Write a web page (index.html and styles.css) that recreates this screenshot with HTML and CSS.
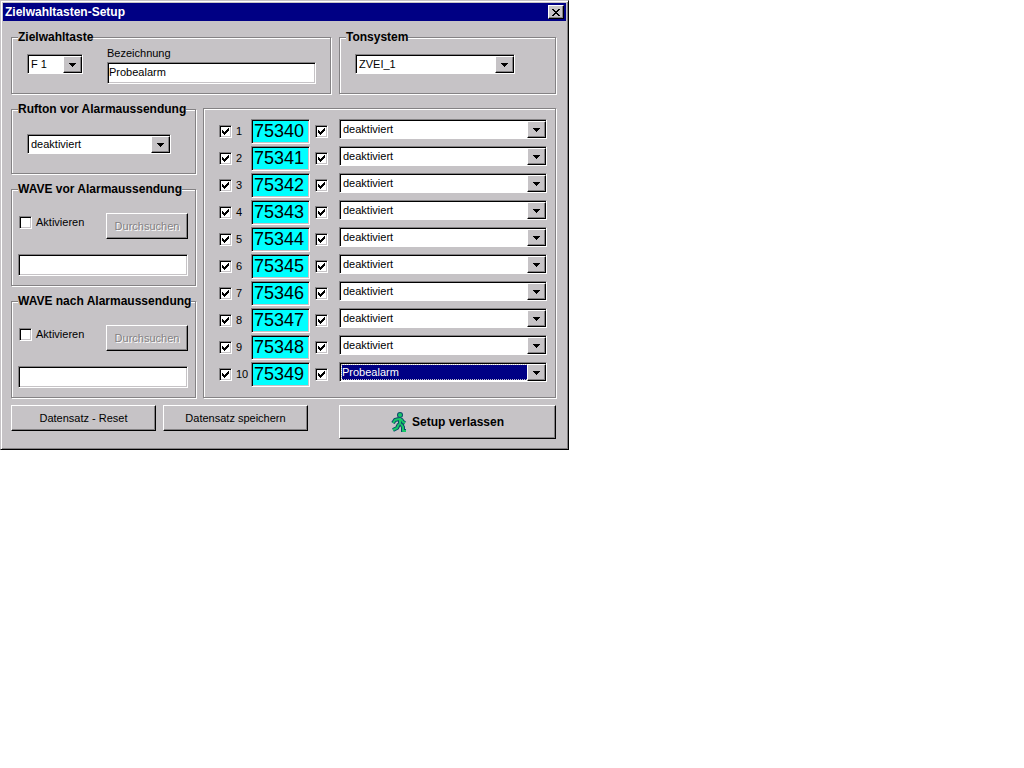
FILE: index.html
```
<!DOCTYPE html>
<html lang="de">
<head>
    <meta charset="UTF-8">
    <meta name="viewport" content="width=device-width, initial-scale=1.0">
    <title>Zielwahltasten-Setup</title>
    <link rel="stylesheet" href="styles.css">
</head>
<body>
    <form class="window" onsubmit="return false">
        <header class="titlebar">
            <h1>Zielwahltasten-Setup</h1>
            <button type="button" class="close" aria-label="Schließen">
                <svg width="8" height="7" viewBox="0 0 8 7" shape-rendering="crispEdges"><path d="M0 0h2v1h1v1h2V1h1V0h2v1H7v1H6v1H5v1h1v1h1v1h1v1H6V6H5V5H3v1H2v1H0V6h1V5h1V4h1V3H2V2H1V1H0z"/></svg>
            </button>
        </header>

        <div class="content">
            <div class="top">
                <fieldset class="group target">
                    <legend>Zielwahltaste</legend>
                    <div class="target-fields">
                        <span class="combo key">
                            <select aria-label="Zielwahltaste"><option>F 1</option></select>
                        </span>
                        <div class="field">
                            <label for="name">Bezeichnung</label>
                            <input type="text" class="text" id="name" value="Probealarm">
                        </div>
                    </div>
                </fieldset>
                <fieldset class="group tone">
                    <legend>Tonsystem</legend>
                    <span class="combo">
                        <select aria-label="Tonsystem"><option>ZVEI_1</option></select>
                    </span>
                </fieldset>
            </div>

            <div class="main">
                <div class="side">
                    <fieldset class="group ring">
                        <legend>Rufton vor Alarmaussendung</legend>
                        <span class="combo">
                            <select aria-label="Rufton"><option>deaktiviert</option></select>
                        </span>
                    </fieldset>
                    <fieldset class="group wave">
                        <legend>WAVE vor Alarmaussendung</legend>
                        <div class="wave-row">
                            <label class="check"><input type="checkbox"> Aktivieren</label>
                            <button type="button" class="button" disabled>Durchsuchen</button>
                        </div>
                        <input type="text" class="text" aria-label="WAVE-Datei vor Alarmaussendung">
                    </fieldset>
                    <fieldset class="group wave">
                        <legend>WAVE nach Alarmaussendung</legend>
                        <div class="wave-row">
                            <label class="check"><input type="checkbox"> Aktivieren</label>
                            <button type="button" class="button" disabled>Durchsuchen</button>
                        </div>
                        <input type="text" class="text" aria-label="WAVE-Datei nach Alarmaussendung">
                    </fieldset>
                </div>

                <div class="group calls">
                    <div class="call">
                        <label class="check"><input type="checkbox" checked> 1</label>
                        <input type="text" class="code" value="75340" aria-label="Ruf 1">
                        <input type="checkbox" checked aria-label="Alarm 1">
                        <span class="combo"><select aria-label="Alarmart 1"><option>deaktiviert</option></select></span>
                    </div>
                    <div class="call">
                        <label class="check"><input type="checkbox" checked> 2</label>
                        <input type="text" class="code" value="75341" aria-label="Ruf 2">
                        <input type="checkbox" checked aria-label="Alarm 2">
                        <span class="combo"><select aria-label="Alarmart 2"><option>deaktiviert</option></select></span>
                    </div>
                    <div class="call">
                        <label class="check"><input type="checkbox" checked> 3</label>
                        <input type="text" class="code" value="75342" aria-label="Ruf 3">
                        <input type="checkbox" checked aria-label="Alarm 3">
                        <span class="combo"><select aria-label="Alarmart 3"><option>deaktiviert</option></select></span>
                    </div>
                    <div class="call">
                        <label class="check"><input type="checkbox" checked> 4</label>
                        <input type="text" class="code" value="75343" aria-label="Ruf 4">
                        <input type="checkbox" checked aria-label="Alarm 4">
                        <span class="combo"><select aria-label="Alarmart 4"><option>deaktiviert</option></select></span>
                    </div>
                    <div class="call">
                        <label class="check"><input type="checkbox" checked> 5</label>
                        <input type="text" class="code" value="75344" aria-label="Ruf 5">
                        <input type="checkbox" checked aria-label="Alarm 5">
                        <span class="combo"><select aria-label="Alarmart 5"><option>deaktiviert</option></select></span>
                    </div>
                    <div class="call">
                        <label class="check"><input type="checkbox" checked> 6</label>
                        <input type="text" class="code" value="75345" aria-label="Ruf 6">
                        <input type="checkbox" checked aria-label="Alarm 6">
                        <span class="combo"><select aria-label="Alarmart 6"><option>deaktiviert</option></select></span>
                    </div>
                    <div class="call">
                        <label class="check"><input type="checkbox" checked> 7</label>
                        <input type="text" class="code" value="75346" aria-label="Ruf 7">
                        <input type="checkbox" checked aria-label="Alarm 7">
                        <span class="combo"><select aria-label="Alarmart 7"><option>deaktiviert</option></select></span>
                    </div>
                    <div class="call">
                        <label class="check"><input type="checkbox" checked> 8</label>
                        <input type="text" class="code" value="75347" aria-label="Ruf 8">
                        <input type="checkbox" checked aria-label="Alarm 8">
                        <span class="combo"><select aria-label="Alarmart 8"><option>deaktiviert</option></select></span>
                    </div>
                    <div class="call">
                        <label class="check"><input type="checkbox" checked> 9</label>
                        <input type="text" class="code" value="75348" aria-label="Ruf 9">
                        <input type="checkbox" checked aria-label="Alarm 9">
                        <span class="combo"><select aria-label="Alarmart 9"><option>deaktiviert</option></select></span>
                    </div>
                    <div class="call">
                        <label class="check"><input type="checkbox" checked> 10</label>
                        <input type="text" class="code" value="75349" aria-label="Ruf 10">
                        <input type="checkbox" checked aria-label="Alarm 10">
                        <span class="combo selected"><select aria-label="Alarmart 10"><option>Probealarm</option></select></span>
                    </div>
                </div>
            </div>

            <div class="actions">
                <button type="button" class="button">Datensatz - Reset</button>
                <button type="button" class="button">Datensatz speichern</button>
                <button type="button" class="button leave">
                    <svg width="16" height="20" viewBox="0 0 16 20" fill="none" stroke-linejoin="round">
                        <path d="M8 7L4 8l-2 3M10 7l2 3 2 1M9 6v6M8 12l-2 4-4 2M10 12l2 3v4h3" stroke="#0a4a6a" stroke-width="4"/>
                        <circle cx="9" cy="3" r="3" fill="#0a4a6a"/>
                        <path d="M8 7L4 8l-2 3M10 7l2 3 2 1M9 6v6M8 12l-2 4-4 2M10 12l2 3v4h3" stroke="#18c868" stroke-width="2"/>
                        <circle cx="9" cy="3" r="2" fill="#18c868"/>
                    </svg>
                    Setup verlassen
                </button>
            </div>
        </div>
    </form>
</body>
</html>
```
FILE: styles.css
```
* {
    box-sizing: border-box;
}

body {
    margin: 0;
    background-color: #fff;
    color: #000;
    font: 11px/13px "Liberation Sans", Arial, sans-serif;
}

input, select, button {
    margin: 0;
    padding: 0;
    font: inherit;
    color: inherit;
    border-radius: 0;
    appearance: none;
}

.window {
    max-width: 569px;
    padding: 2px;
    background-color: #c6c3c6;
    border: 1px solid;
    border-color: #c6c3c6 #000 #000 #c6c3c6;
    box-shadow: inset 1px 1px #fff, inset -1px -1px #848284;
}

.titlebar {
    display: flex;
    justify-content: space-between;
    align-items: center;
    height: 18px;
    padding: 0 2px;
    background-color: #000084;
    color: #fff;
}

.titlebar h1 {
    margin: 0;
    font-size: 12px;
}

.close {
    display: flex;
    justify-content: center;
    align-items: center;
    width: 16px;
    height: 14px;
    background-color: #c6c3c6;
    color: #000;
    border: 1px solid;
    border-color: #fff #000 #000 #fff;
    box-shadow: inset -1px -1px #848284;
}

.content {
    padding: 9px 10px 8px 8px;
}

/* Group boxes */
.group {
    min-width: 0;
    margin: 0;
    border: 1px solid #848284;
    box-shadow: 1px 1px #fff, inset 1px 1px #fff;
}

legend {
    height: 14px;
    padding: 0;
    background-color: #c6c3c6;
    font-size: 12px;
    font-weight: bold;
    line-height: 14px;
    white-space: nowrap;
}

.top {
    display: grid;
    grid-template-columns: minmax(0, 320fr) minmax(0, 217fr);
    gap: 8px;
    margin-bottom: 8px;
}

.target {
    padding: 3px 14px 9px 6px;
}

.target-fields {
    display: flex;
    gap: 24px;
    margin-left: 9px;
}

.key {
    width: 56px;
    margin-top: 7px;
}

.field {
    display: flex;
    flex: 1;
    flex-direction: column;
    gap: 2px;
}

.tone {
    padding: 10px 40px 10px 6px;
}

.main {
    display: grid;
    grid-template-columns: minmax(0, 185fr) minmax(0, 353fr);
    gap: 7px;
    margin-bottom: 7px;
}

.side {
    display: flex;
    flex-direction: column;
    gap: 8px;
}

.ring {
    padding: 18px 24px 19px 6px;
}

.tone .combo,
.ring .combo {
    margin-left: 9px;
}

.wave {
    padding: 17px 7px 9px 6px;
}

.wave-row {
    display: flex;
    justify-content: space-between;
    align-items: flex-start;
    margin: 0 0 15px 1px;
}

.wave .text {
    width: auto;
    min-width: 100%;
}

.wave-row .check {
    height: 19px;
}

.wave-row .button {
    width: 82px;
}

/* Controls */
.text {
    display: block;
    width: 100%;
    height: 22px;
    padding: 0 0 2px;
    background-color: #fff;
    border: 1px solid;
    border-color: #848284 #fff #fff #848284;
    box-shadow: inset 1px 1px #000, inset -1px -1px #c6c3c6;
    text-indent: 1px;
}

.combo {
    display: block;
    position: relative;
    height: 20px;
    background-color: #fff;
    border: 1px solid;
    border-color: #848284 #fff #fff #848284;
    box-shadow: inset 1px 1px #000;
}

.combo select {
    display: block;
    width: 100%;
    height: 18px;
    padding: 0 18px 0 3px;
    background: none;
    border: 0;
}

/* drop-down arrow button */
.combo::after {
    content: "";
    position: absolute;
    top: 1px;
    right: 0;
    bottom: 0;
    width: 17px;
    background: #c6c3c6 url("data:image/svg+xml,%3Csvg xmlns='http://www.w3.org/2000/svg' width='7' height='4' shape-rendering='crispEdges'%3E%3Cpath d='M0 0h7v1H6v1H5v1H4v1H3V3H2V2H1V1H0z'/%3E%3C/svg%3E") no-repeat center;
    border: 1px solid;
    border-color: #fff #000 #000 #fff;
    box-shadow: inset -1px -1px #848284;
    pointer-events: none;
}

.selected select {
    padding: 2px 18px 1px 2px;
    background-color: #000084;
    background-clip: content-box;
    color: #fff;
    outline: 1px dotted #c6c3c6;
    outline-offset: -2px;
}

input[type="checkbox"] {
    flex: none;
    width: 13px;
    height: 13px;
    background: #fff no-repeat 2px 2px;
    border: 1px solid;
    border-color: #848284 #fff #fff #848284;
    box-shadow: inset 1px 1px #000, inset -1px -1px #c6c3c6;
}

input[type="checkbox"]:checked {
    background-image: url("data:image/svg+xml,%3Csvg xmlns='http://www.w3.org/2000/svg' width='7' height='7' shape-rendering='crispEdges'%3E%3Cpath d='M0 2h1v1h1v1h1V3h1V2h1V1h1V0h1v3H6v1H5v1H4v1H3v1H2V6H1V5H0z'/%3E%3C/svg%3E");
}

.check {
    display: flex;
    align-items: center;
    gap: 4px;
}

.button {
    display: flex;
    justify-content: center;
    align-items: center;
    height: 26px;
    background-color: #c6c3c6;
    border: 1px solid;
    border-color: #fff #000 #000 #fff;
    box-shadow: inset -1px -1px #848284;
}

.button:disabled {
    color: #848284;
    text-shadow: 1px 1px #fff;
}

/* Call list */
.calls {
    display: flex;
    flex-direction: column;
    gap: 2px;
    margin-top: 6px;
    padding: 10px 8px 10px 15px;
}

.call {
    display: grid;
    grid-template-columns: 32px 59px 18px 1fr;
    align-items: center;
}

.call > input[type="checkbox"] {
    justify-self: end;
}

.call .combo {
    align-self: start;
    margin-left: 11px;
}

.code {
    width: 59px;
    height: 25px;
    background-color: #0ff;
    border: 1px solid;
    border-color: #848284 #fff #fff #848284;
    box-shadow: inset 1px 1px #000, inset -1px -1px #c6c3c6;
    font-size: 18px;
    text-indent: 2px;
}

.actions {
    display: grid;
    grid-template-columns: minmax(0, 145fr) minmax(0, 145fr) minmax(0, 241fr);
    align-items: start;
    column-gap: 7px;
}

.leave {
    gap: 5px;
    height: 34px;
    margin-left: 24px;
    font-size: 12px;
    font-weight: bold;
}
```
